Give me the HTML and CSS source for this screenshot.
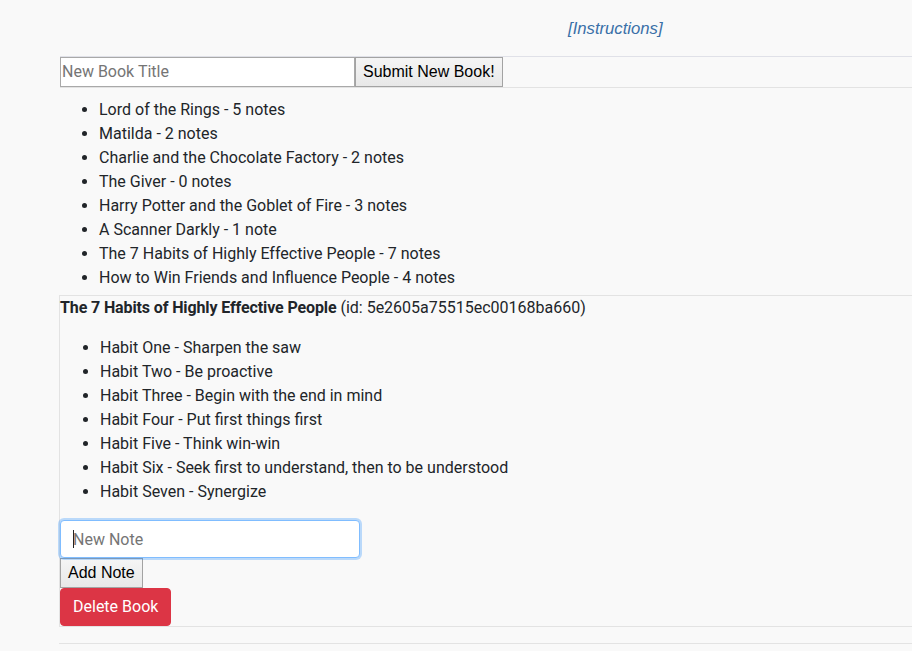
FILE: index.html
```html
<!DOCTYPE html>
<html>
<head>
<meta charset="utf-8">
<link rel="stylesheet" href="styles.css">
</head>
<body>
<div class="page">
  <header class="top">
    <a class="instructions" href="#">[Instructions]</a>
  </header>
  <form class="new-book">
    <input class="book-input" type="text" placeholder="New Book Title">
    <button class="plain-btn submit-btn" type="button">Submit New Book!</button>
  </form>
  <ul class="books">
    <li>Lord of the Rings - 5 notes</li>
    <li>Matilda - 2 notes</li>
    <li>Charlie and the Chocolate Factory - 2 notes</li>
    <li>The Giver - 0 notes</li>
    <li>Harry Potter and the Goblet of Fire - 3 notes</li>
    <li>A Scanner Darkly - 1 note</li>
    <li>The 7 Habits of Highly Effective People - 7 notes</li>
    <li>How to Win Friends and Influence People - 4 notes</li>
  </ul>
  <section class="detail">
    <div class="detail-title"><strong class="book-name">The 7 Habits of Highly Effective People</strong> (id: 5e2605a75515ec00168ba660)</div>
    <ul class="notes">
      <li>Habit One - Sharpen the saw</li>
      <li>Habit Two - Be proactive</li>
      <li>Habit Three - Begin with the end in mind</li>
      <li>Habit Four - Put first things first</li>
      <li>Habit Five - Think win-win</li>
      <li>Habit Six - Seek first to understand, then to be understood</li>
      <li>Habit Seven - Synergize</li>
    </ul>
    <div class="note-field">
      <input class="note-input" type="text" placeholder="New Note">
      <span class="caret"></span>
    </div>
    <button class="plain-btn add-btn" type="button">Add Note</button>
    <button class="danger-btn" type="button">Delete Book</button>
  </section>
  <hr class="rule">
</div>
</body>
</html>
```
FILE: styles.css
```css
html, body {
  margin: 0;
  padding: 0;
  background: #f9f9f9;
}
body {
  font-family: Roboto, "Liberation Sans", sans-serif;
  font-size: 16px;
  line-height: 24px;
  color: #212529;
}
.page {
  padding-left: 60px;
}
.top {
  height: 56px;
  display: flex;
  align-items: center;
}
.instructions {
  margin-left: 508px;
  margin-top: 1px;
  font-family: "Liberation Sans", Arial, sans-serif;
  font-style: italic;
  font-size: 16.7px;
  color: #3a70a8;
  text-decoration: none;
}
.new-book {
  display: flex;
  margin: 0;
  border-top: 1px solid #e0e1e8;
  border-bottom: 1px solid #e3e3e3;
  height: 30px;
}
.book-input {
  box-sizing: border-box;
  width: 295px;
  height: 30px;
  margin: 0;
  padding: 0 2px 1px 1px;
  border: 1px solid #a9a9a9;
  background: #fff;
  font-family: Roboto, sans-serif;
  font-size: 16px;
  color: #212529;
  outline: none;
}
.book-input::placeholder, .note-input::placeholder {
  color: #757575;
}
.plain-btn {
  box-sizing: border-box;
  margin: 0;
  padding: 0 7px;
  border: 1px solid #a3a3a3;
  background: linear-gradient(#f5f5f5, #e8e8e8);
  font-family: "Liberation Sans", Arial, sans-serif;
  font-size: 16px;
  color: #000;
}
.submit-btn {
  height: 30px;
}
.books {
  margin: 10px 0 5px;
  padding-left: 39px;
}
.detail {
  margin-left: -1px;
  border-top: 1px solid #e3e3e3;
  border-left: 1px solid #e3e3e3;
  border-bottom: 1px solid #e3e3e3;
  display: flex;
  flex-direction: column;
  align-items: flex-start;
}
.detail-title {
  line-height: 23px;
}
.book-name {
  font-weight: 700;
  letter-spacing: -0.12px;
}
.notes {
  margin: 17px 0 16px;
  padding-left: 40px;
}
.note-field {
  position: relative;
}
.note-input {
  box-sizing: border-box;
  display: block;
  width: 300px;
  height: 38px;
  margin: 0;
  padding: 6px 12px;
  border: 1px solid #80bdff;
  border-radius: 4px;
  background: #fff;
  box-shadow: 0 0 0 2px rgba(0, 123, 255, 0.25);
  font-family: Roboto, sans-serif;
  font-size: 16px;
  color: #495057;
  outline: none;
}
.caret {
  position: absolute;
  left: 13px;
  top: 10px;
  width: 1px;
  height: 18px;
  background: #222;
}
.add-btn {
  height: 30px;
  padding: 0 7px;
}
.danger-btn {
  box-sizing: border-box;
  height: 38px;
  margin: 0;
  padding: 6px 12px;
  border: 1px solid #dc3545;
  border-radius: 4px;
  background: #dc3545;
  color: #fff;
  font-family: Roboto, sans-serif;
  font-size: 16px;
  line-height: 24px;
}
.rule {
  margin: 16px 0 0 -1px;
  border: 0;
  border-top: 1px solid #e3e3e3;
}
```
